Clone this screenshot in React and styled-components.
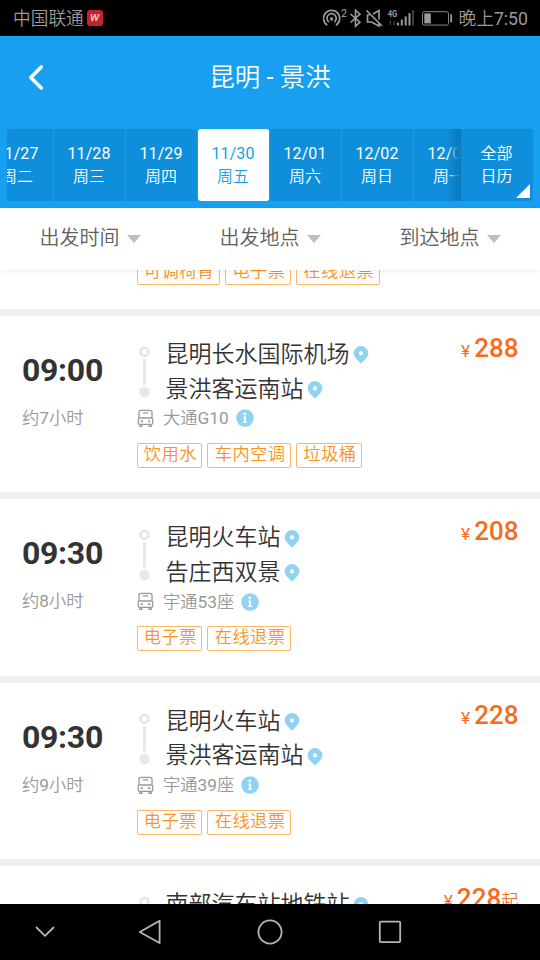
import styled, { createGlobalStyle, css } from "styled-components";

const dates = [
    { date: "11/27", day: "周二" },
    { date: "11/28", day: "周三" },
    { date: "11/29", day: "周四" },
    { date: "11/30", day: "周五", selected: true },
    { date: "12/01", day: "周六" },
    { date: "12/02", day: "周日" },
    { date: "12/03", day: "周一" },
];

const filters = ["出发时间", "出发地点", "到达地点"];

const previousTags = ["可调椅背", "电子票", "在线退票"];

const trips = [
    {
        id: 1,
        time: "09:00",
        duration: "约7小时",
        from: "昆明长水国际机场",
        to: "景洪客运南站",
        bus: "大通G10",
        price: 288,
        tags: ["饮用水", "车内空调", "垃圾桶"],
    },
    {
        id: 2,
        time: "09:30",
        duration: "约8小时",
        from: "昆明火车站",
        to: "告庄西双景",
        bus: "宇通53座",
        price: 208,
        tags: ["电子票", "在线退票"],
    },
    {
        id: 3,
        time: "09:30",
        duration: "约9小时",
        from: "昆明火车站",
        to: "景洪客运南站",
        bus: "宇通39座",
        price: 228,
        tags: ["电子票", "在线退票"],
    },
    {
        id: 4,
        from: "南部汽车站地铁站",
        price: 228,
        priceFrom: true,
    },
];

function StatusIcons() {
    return (
        <svg width="132" height="24" viewBox="0 0 132 24" fill="none">
            {/* hotspot */}
            <g stroke="#9b9b9b" strokeWidth="1.7">
                <path d="M4.2 19.2A8.1 8.1 0 1 1 13 19.2" />
                <path d="M5.9 16A4.6 4.6 0 1 1 11.3 16" />
            </g>
            <circle cx="8.6" cy="13" r="1.7" fill="#9b9b9b" />
            <text
                x="18"
                y="11.2"
                fontSize="10.5"
                fontWeight="400"
                fill="#a5a5a5"
            >
                2
            </text>
            {/* bluetooth */}
            <path
                d="M27.5 8L37 16.2L32.5 20.2V4.2L37 8.2L27.5 16.5"
                stroke="#9b9b9b"
                strokeWidth="1.6"
            />
            {/* muted */}
            <path
                d="M43.5 4.5L59 20M46.5 9H44.5V16H48.5L56 20V16.5M50 8L56 4.5V13.5"
                stroke="#9b9b9b"
                strokeWidth="1.7"
            />
            {/* signal */}
            <text
                x="64.7"
                y="10.6"
                fontSize="9.5"
                fontWeight="700"
                textLength="9.5"
                lengthAdjust="spacingAndGlyphs"
                fill="#9b9b9b"
            >
                4G
            </text>
            <path
                d="M67.5 19V15M66.2 16.3L67.5 14.8M71 14.5V18.8M71 18.8L72.3 17.2"
                stroke="#464646"
            />
            <g fill="#9b9b9b">
                <rect x="74" y="16.6" width="2" height="2.9" />
                <rect x="77.8" y="13.6" width="2" height="5.9" />
                <rect x="81.7" y="10.4" width="2" height="9.1" />
                <rect x="85.5" y="7.2" width="2" height="12.3" />
            </g>
            <rect x="89" y="4" width="2" height="15.5" fill="#3a3a3a" />
            {/* battery */}
            <rect
                x="99.5"
                y="5.7"
                width="26"
                height="13.4"
                rx="1.8"
                stroke="#858585"
            />
            <rect x="101.3" y="7.4" width="6.5" height="10" fill="#9b9b9b" />
            <rect x="127.3" y="8.3" width="1.8" height="8" fill="#9b9b9b" />
        </svg>
    );
}

function PinIcon() {
    return (
        <svg width="16" height="20" viewBox="0 0 16 20">
            <path
                fill="#8fd3f2"
                fillRule="evenodd"
                d="M8 1A7.3 7.3 0 0 0 .7 8.3C.7 12.3 4.4 14.8 8 18.8C11.6 14.8 15.3 12.3 15.3 8.3A7.3 7.3 0 0 0 8 1ZM8 6.3A2.1 2.1 0 1 1 8 10.5A2.1 2.1 0 1 1 8 6.3Z"
            />
        </svg>
    );
}

function BusIcon() {
    return (
        <svg width="17" height="19" viewBox="0 0 17 19" fill="none">
            <path
                d="M4 1.3H13Q15 1.3 15 3.3V9H2V3.3Q2 1.3 4 1.3ZM2 9Q1.3 9.3 1.3 10.2V14Q1.3 15.3 2.6 15.3H14.4Q15.7 15.3 15.7 14V10.2Q15.7 9.3 15 9M5.8 3.9H11.2M2.7 15.3V17.4H4.9V15.3M12.1 15.3V17.4H14.3V15.3"
                stroke="#999"
                strokeWidth="1.3"
                strokeLinejoin="round"
            />
            <path d="M3.8 12.2H5.8M11.2 12.2H13.2" stroke="#999" strokeWidth="1.9" />
        </svg>
    );
}

function InfoIcon() {
    return (
        <svg width="18" height="18" viewBox="0 0 18 18">
            <circle cx="9" cy="9" r="8.8" fill="#8fd3f2" />
            <circle cx="8.8" cy="5" r="1.4" fill="#fff" />
            <path
                d="M7.5 8.3H9V13M7.2 13.2H10.8"
                stroke="#fff"
                strokeWidth="1.8"
                fill="none"
            />
        </svg>
    );
}

function RouteIcon() {
    return (
        <svg width="11" height="52" viewBox="0 0 11 52" fill="none">
            <circle cx="5.5" cy="5.7" r="4" stroke="#e5e5e5" strokeWidth="2.6" />
            <path d="M5.5 12.7V38.7" stroke="#e8e8e8" strokeWidth="3" />
            <circle cx="5.5" cy="46" r="5.2" fill="#e8e8e8" />
        </svg>
    );
}

function TagList({ tags }) {
    return (
        <Tags>
            {tags.map((tag) => (
                <Tag key={tag}>{tag}</Tag>
            ))}
        </Tags>
    );
}

function Trip({ trip }) {
    return (
        <TripCard>
            <TimeColumn>
                <Time>{trip.time}</Time>
                <Duration>{trip.duration}</Duration>
            </TimeColumn>
            <RouteColumn>
                <Route>
                    <RouteIcon />
                    <Stations>
                        <Station>
                            {trip.from}
                            <PinIcon />
                        </Station>
                        {trip.to && (
                            <Station>
                                {trip.to}
                                <PinIcon />
                            </Station>
                        )}
                    </Stations>
                </Route>
                {trip.bus && (
                    <Bus>
                        <BusIcon />
                        <span>{trip.bus}</span>
                        <InfoIcon />
                    </Bus>
                )}
                {trip.tags && <TagList tags={trip.tags} />}
            </RouteColumn>
            <Price>
                <small>¥</small>
                {trip.price}
                {trip.priceFrom && <From>起</From>}
            </Price>
        </TripCard>
    );
}

export default function App() {
    return (
        <Screen>
            <GlobalStyle />
            <StatusBar>
                <Carrier>
                    中国联通
                    <AppBadge>w</AppBadge>
                </Carrier>
                <StatusRight>
                    <StatusIcons />
                    <span>晚上7:50</span>
                </StatusRight>
            </StatusBar>

            <Header>
                <TitleBar>
                    <BackButton aria-label="返回">
                        <svg width="16" height="28" viewBox="0 0 16 28">
                            <path
                                d="M13.3 3L2.8 13.5L13.3 24"
                                fill="none"
                                stroke="#fff"
                                strokeWidth="3.6"
                                strokeLinecap="round"
                                strokeLinejoin="round"
                            />
                        </svg>
                    </BackButton>
                    <Title>昆明 - 景洪</Title>
                </TitleBar>
                <DateStrip>
                    <DateScroller>
                        <DateRow>
                            {dates.map(({ date, day, selected }) => (
                                <DateCell key={date} $selected={selected}>
                                    <span>{date}</span>
                                    <span>{day}</span>
                                </DateCell>
                            ))}
                        </DateRow>
                    </DateScroller>
                    <CalendarButton>
                        <span>全部</span>
                        <span>日历</span>
                    </CalendarButton>
                </DateStrip>
            </Header>

            <FilterBar>
                {filters.map((filter) => (
                    <Filter key={filter}>{filter}</Filter>
                ))}
            </FilterBar>

            <TripList>
                <PreviousTrip>
                    <TagList tags={previousTags} />
                </PreviousTrip>
                {trips.map((trip) => (
                    <Trip key={trip.id} trip={trip} />
                ))}
            </TripList>

            <NavBar>
                <svg width="24" height="28" viewBox="0 0 24 28">
                    <path d="M4.5 9.5L13 17.8L21.5 9.5" />
                </svg>
                <svg width="28" height="28" viewBox="0 0 28 28">
                    <path d="M23.6 2.8V25L3.8 14Z" />
                </svg>
                <svg width="28" height="28" viewBox="0 0 28 28">
                    <circle cx="14" cy="14" r="11.6" />
                </svg>
                <svg width="28" height="28" viewBox="0 0 28 28">
                    <rect x="3.8" y="3.7" width="20.4" height="20.4" rx="1" />
                </svg>
            </NavBar>
        </Screen>
    );
}

const GlobalStyle = createGlobalStyle`
    body {
        margin: 0;
        font-family: Roboto, "Noto Sans CJK SC DemiLight", "Noto Sans CJK SC", sans-serif;
    }

    svg {
        display: block;
        flex-shrink: 0;
    }
`;

const Screen = styled.div`
    width: 540px;
    height: 960px;
    display: flex;
    flex-direction: column;
    overflow: hidden;
    background-color: #fff;
`;

const StatusBar = styled.div`
    height: 36px;
    flex-shrink: 0;
    box-sizing: border-box;
    padding: 2px 12px 0 13px;
    display: flex;
    justify-content: space-between;
    align-items: center;
    background-color: #000;
    color: #9b9b9b;
    font-size: 17.7px;
    font-weight: 400;
    line-height: 34px;
`;

const Carrier = styled.div`
    display: flex;
    align-items: center;
    gap: 3px;
`;

const AppBadge = styled.span`
    width: 16px;
    height: 16px;
    margin-top: -2px;
    border-radius: 3px;
    background-color: #c4232b;
    color: #e8c8c8;
    font-size: 13px;
    font-weight: 500;
    font-style: italic;
    line-height: 14px;
    text-align: center;
`;

const StatusRight = styled.div`
    display: flex;
    align-items: center;
    gap: 4px;

    svg {
        margin-top: -2px;
    }
`;

const Header = styled.header`
    height: 172px;
    flex-shrink: 0;
    background-color: #189ff0;
    color: #fff;
`;

const TitleBar = styled.div`
    height: 93px;
    box-sizing: border-box;
    padding: 0 28px 11px;
    display: grid;
    grid-template-columns: 16px 1fr 16px;
    align-items: center;
`;

const BackButton = styled.button`
    padding: 1px 0 0;
    border: none;
    background: none;
    cursor: pointer;
`;

const Title = styled.h1`
    margin: 0;
    font-size: 25.5px;
    font-weight: 400;
    line-height: 38px;
    text-align: center;
`;

const DateStrip = styled.div`
    height: 72px;
    margin: 0 7px;
    display: flex;
    border-radius: 3px;
    overflow: hidden;
    background-color: #0f8edb;
`;

const DateScroller = styled.div`
    width: 454px;
    flex-shrink: 0;
    overflow: hidden;
`;

const DateRow = styled.div`
    display: flex;
    margin-left: -25px;
`;

const dateText = css`
    display: flex;
    flex-direction: column;
    justify-content: center;
    align-items: center;
    height: 72px;
    box-sizing: border-box;
    padding-right: 1px;
    font-size: 16px;
    line-height: 23px;
`;

const DateCell = styled.div`
    ${dateText}
    width: 72px;
    flex-shrink: 0;
    border-right: 1px solid #189ff0;
    letter-spacing: 0.1px;

    ${({ $selected }) =>
        $selected &&
        css`
            border-radius: 3px;
            background-color: #fff;
            color: #189fdf;
        `}
`;

const CalendarButton = styled.div`
    ${dateText}
    flex: 1;
    position: relative;

    &::before {
        content: "";
        position: absolute;
        top: 0;
        bottom: 0;
        left: -13px;
        width: 13px;
        background: linear-gradient(
            to right,
            rgba(11, 120, 188, 0),
            rgba(11, 120, 188, 0.75) 60%,
            rgb(11, 120, 188)
        );
    }

    &::after {
        content: "";
        position: absolute;
        right: 3px;
        bottom: 3px;
        border-bottom: 14px solid #fff;
        border-left: 14px solid transparent;
    }
`;

const FilterBar = styled.div`
    height: 62px;
    flex-shrink: 0;
    box-sizing: border-box;
    padding-bottom: 5px;
    display: grid;
    grid-template-columns: repeat(3, 1fr);
    position: relative;
    z-index: 1;
    background-color: #fff;
    box-shadow: 0 1px 6px rgba(0, 0, 0, 0.07);
`;

const Filter = styled.div`
    display: flex;
    justify-content: center;
    align-items: center;
    gap: 7px;
    color: #606060;
    font-size: 20px;

    &::after {
        content: "";
        margin-top: 5px;
        border-top: 8px solid #bfbfbf;
        border-left: 7px solid transparent;
        border-right: 7px solid transparent;
    }
`;

const TripList = styled.main`
    flex: 1;
    min-height: 0;
    overflow: hidden;
`;

const PreviousTrip = styled.div`
    height: 46.4px;
    margin-top: -10px;
    padding: 0 0 2.6px 136.5px;
    border-bottom: 7.33px solid #f0f0f0;
`;

const TripCard = styled.article`
    height: 183.4px;
    box-sizing: border-box;
    padding: 0 21.5px 0 22px;
    display: grid;
    grid-template-columns: 114.5px 1fr auto;
    border-bottom: 7.33px solid #f0f0f0;
`;

const TimeColumn = styled.div`
    padding-top: 34px;
`;

const Time = styled.div`
    color: #333;
    font-size: 32px;
    font-weight: 700;
    letter-spacing: -0.3px;
    line-height: 40px;
`;

const Duration = styled.div`
    margin-top: 15px;
    color: #999;
    font-size: 17.3px;
    line-height: 26px;
`;

const RouteColumn = styled.div`
    padding-top: 22px;
`;

const Route = styled.div`
    display: flex;
    align-items: flex-start;
    gap: 15.5px;
    padding-left: 2.5px;

    > svg {
        margin-top: 8px;
    }
`;

const Stations = styled.div`
    display: flex;
    flex-direction: column;
`;

const Station = styled.div`
    display: flex;
    align-items: center;
    gap: 3.5px;
    color: #333;
    font-size: 23px;
    line-height: 34.7px;
    white-space: nowrap;
`;

const Bus = styled.div`
    display: flex;
    align-items: center;
    height: 26px;
    margin-top: -2px;
    color: #999;
    font-size: 17.3px;
    line-height: 26px;

    span {
        margin: 0 7px 0 9.5px;
    }
`;

const Tags = styled.div`
    display: flex;
    gap: 5px;
`;

const Tag = styled.span`
    height: 25px;
    box-sizing: border-box;
    padding: 0 4.6px 0 6.3px;
    border: 1px solid #fdb866;
    border-radius: 2px;
    color: #f7931e;
    font-size: 17.3px;
    letter-spacing: 0.4px;
    line-height: 21px;
    white-space: nowrap;

    ${RouteColumn} & {
        margin-top: 11.5px;
    }
`;

const Price = styled.div`
    padding-top: 15px;
    color: #f76b1c;
    font-size: 26px;
    font-weight: 500;
    line-height: 34px;

    small {
        margin-right: 4px;
        font-size: 17.3px;
        font-weight: 400;
    }
`;

const From = styled.span`
    font-size: 17.3px;
    font-weight: 400;
`;

const NavBar = styled.nav`
    height: 56px;
    flex-shrink: 0;
    box-sizing: border-box;
    padding-left: 32px;
    display: grid;
    grid-template-columns: 104px 120px 120px 28px;
    align-items: center;
    background-color: #000;

    svg {
        fill: none;
        stroke: #b5b5b5;
        stroke-width: 1.8;
        stroke-linejoin: round;
        stroke-linecap: round;
    }
`;
